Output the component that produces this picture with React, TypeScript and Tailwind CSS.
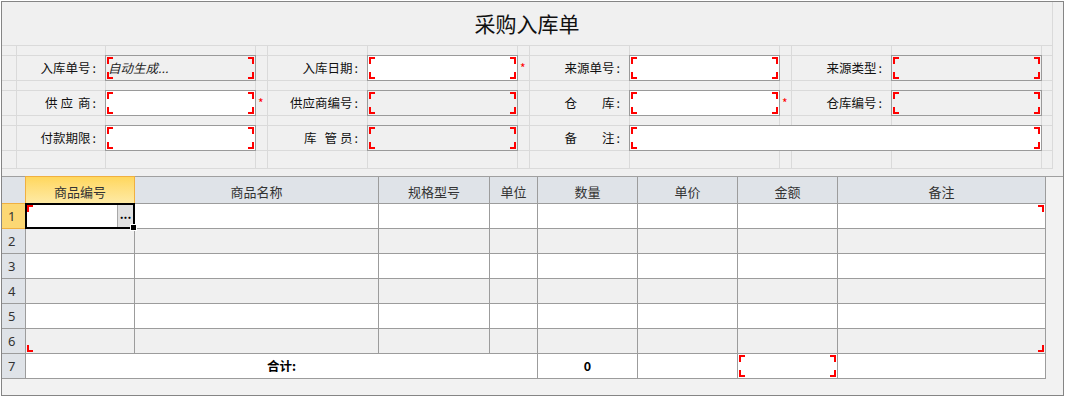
import React from "react";

const RED = "border-[#ff0000]";

function Brackets({ inset = true }: { inset?: boolean }) {
  const p = inset ? "1px" : "0px";
  const s = "pointer-events-none absolute w-[6px] h-[7px] " + RED;
  return (
    <>
      <span className={s + " border-l-2 border-t-2"} style={{ left: p, top: p }} />
      <span className={s + " border-r-2 border-t-2"} style={{ right: p, top: p }} />
      <span className={s + " border-l-2 border-b-2"} style={{ left: p, bottom: p }} />
      <span className={s + " border-r-2 border-b-2"} style={{ right: p, bottom: p }} />
    </>
  );
}

type Part = [string, number];

type Cell =
  | { k: "empty" }
  | { k: "label"; p: Part[] }
  | { k: "input"; white: boolean; ph?: string; span?: number }
  | { k: "star"; on: boolean };

const E: Cell = { k: "empty" };
const L = (t: string): Cell => ({ k: "label", p: [[t, 0]] });
const LP = (p: Part[]): Cell => ({ k: "label", p });
const I = (white: boolean, ph?: string, span?: number): Cell => ({ k: "input", white, ph, span });
const S = (on: boolean): Cell => ({ k: "star", on });

const fieldRows: Cell[][] = [
  [E, L("入库单号"), I(false, "自动生成..."), S(false), L("入库日期"), I(true), S(true), L("来源单号"), I(true), S(false), L("来源类型"), I(false), E],
  [
    E,
    LP([["供", 0], ["应", 3], ["商", 5]]),
    I(true),
    S(true),
    L("供应商编号"),
    I(false),
    S(false),
    LP([["仓", 0], ["库", 25]]),
    I(true),
    S(true),
    L("仓库编号"),
    I(false),
    E,
  ],
  [
    E,
    L("付款期限"),
    I(true),
    S(false),
    LP([["库", 0], ["管", 8], ["员", 3]]),
    I(false),
    S(false),
    LP([["备", 0], ["注", 25]]),
    I(true, undefined, 4),
    E,
  ],
];

function renderCell(c: Cell, key: string) {
  if (c.k === "empty") return <div key={key} className="bg-[#f0f0f0]" />;
  if (c.k === "label")
    return (
      <div key={key} className="bg-[#f0f0f0] flex items-center justify-end pr-[9px] text-[12.5px] text-[#111] whitespace-pre leading-none">
        {c.p.map(([t, m], i) => (
          <span key={i} style={{ marginLeft: m }}>
            {t}
          </span>
        ))}
        <span className="ml-[2px]">:</span>
      </div>
    );
  if (c.k === "star")
    return (
      <div key={key} className="bg-[#f0f0f0] flex items-center pl-[2px] text-[12px] text-[#ff0000] leading-none">
        {c.on ? "*" : ""}
      </div>
    );
  return (
    <div
      key={key}
      className={
        "relative -m-px border border-[#9a9a9a] flex items-center pl-[2px] " +
        (c.white ? "bg-white " : "bg-[#f0f0f0] ") +
        (c.span === 4 ? "col-span-4" : "")
      }
    >
      {c.ph ? <span className="italic text-[12.5px] text-[#222] leading-none">{c.ph}</span> : null}
      <Brackets />
    </div>
  );
}

const heads = ["商品编号", "商品名称", "规格型号", "单位", "数量", "单价", "金额", "备注"];

export default function App() {
  const spacer = (r: number) =>
    Array.from({ length: 13 }, (_, i) => <div key={`s${r}-${i}`} className="bg-[#f0f0f0]" />);

  return (
    <div className="ml-px mt-px w-[1063px] h-[395px] border border-[#858585] bg-[#f0f0f0] flex flex-col font-['Noto_Sans_CJK_SC',sans-serif]">
      {/* form */}
      <div className="flex">
        <div className="grid grid-cols-[14px_88px_149px_11px_99px_149px_11px_99px_149px_11px_99px_149px_10px] grid-rows-[43px_9px_24px_9px_24px_9px_24px_17px] gap-px bg-[#dadada] border-r border-b border-[#dadada]">
          <div className="col-span-full bg-[#f0f0f0] flex items-center justify-center text-[21px] text-[#111] leading-none">
            采购入库单
          </div>
          {spacer(1)}
          {fieldRows[0].map((c, i) => renderCell(c, `a${i}`))}
          {spacer(2)}
          {fieldRows[1].map((c, i) => renderCell(c, `b${i}`))}
          {spacer(3)}
          {fieldRows[2].map((c, i) => renderCell(c, `c${i}`))}
          {spacer(4)}
        </div>
      </div>
      <div className="h-[7px]" />
      {/* table panel */}
      <div className="flex-1 border-t border-[#a0a0a0] bg-[#f2f2f2]">
        <div className="relative w-[1044px]">
          <div className="grid grid-cols-[23px_108px_243px_110px_47px_99px_99px_99px_207px] grid-rows-[26px_repeat(7,24px)] gap-px bg-[#9c9c9c] border-r border-b border-[#9c9c9c] text-[13px] text-[#333]">
            <div className="bg-[#dfe3e8]" />
            {heads.map((h, i) =>
              i === 0 ? (
                <div
                  key={h}
                  className="-my-px -mx-px border border-[#f0b040] bg-gradient-to-b from-[#ffd75c] to-[#feeaa4] flex items-center justify-center leading-none pt-[2px]"
                >
                  {h}
                </div>
              ) : (
                <div key={h} className="bg-[#dfe3e8] flex items-center justify-center leading-none pt-[2px]">
                  {h}
                </div>
              )
            )}
            {[1, 2, 3, 4, 5, 6].map((r) => {
              const bg = r % 2 === 1 ? "bg-white" : "bg-[#f0f0f0]";
              return (
                <React.Fragment key={r}>
                  <div
                    className={
                      "flex items-center pl-[6px] leading-none font-['Noto_Sans',sans-serif] text-[13px] " +
                      (r === 1 ? "-my-px -mr-px border-y border-r border-[#f0b040] bg-[#fcd874]" : "bg-[#dfe3e8]")
                    }
                  >
                    {r}
                  </div>
                  {heads.map((h, i) =>
                    r === 1 && i === 0 ? (
                      <div key={h} className="relative -m-px border-2 border-black bg-white flex justify-end">
                        <div className="w-[16px] h-full bg-[#e1e1e1] border-l border-[#a8a8a8] flex items-center justify-center text-[12px] font-bold text-black leading-none pb-[4px]">
                          ...
                        </div>
                        <span className="absolute -right-[3px] -bottom-[3px] w-[5px] h-[5px] bg-black outline outline-1 outline-white" />
                      </div>
                    ) : (
                      <div key={h} className={bg} />
                    )
                  )}
                </React.Fragment>
              );
            })}
            <div className="bg-[#dfe3e8] flex items-center pl-[6px] leading-none font-['Noto_Sans',sans-serif] text-[13px]">7</div>
            <div className="col-span-4 bg-white flex items-center justify-center font-bold text-[12.5px] text-black leading-none">
              合计:
            </div>
            <div className="bg-white flex items-center justify-center font-bold text-[12.5px] text-black leading-none">0</div>
            <div className="bg-white" />
            <div className="relative bg-white">
              <Brackets />
            </div>
            <div className="bg-white" />
          </div>
          {/* data-area brackets */}
          <div className="pointer-events-none absolute left-[25px] top-[28px] w-[1017px] h-[147px]">
            <Brackets inset={false} />
          </div>
        </div>
      </div>
    </div>
  );
}
